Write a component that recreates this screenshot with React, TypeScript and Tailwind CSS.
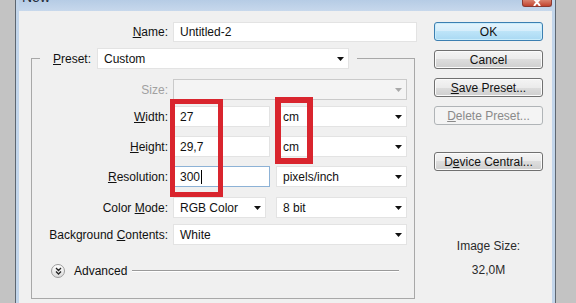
import type { ReactNode } from "react";

function Arrow({ muted }: { muted?: boolean }) {
  return (
    <svg width="7" height="4" viewBox="0 0 7 4" className="shrink-0">
      <path d="M0 0h7L3.5 4z" fill={muted ? "#a9a9a9" : "#111"} />
    </svg>
  );
}

function Select({ value, className, muted }: { value?: string; className: string; muted?: boolean }) {
  return (
    <div
      className={`flex h-[21px] items-center justify-between border pl-[6px] pr-[4px] ${
        muted ? "border-[#cacaca] bg-[#f4f4f4]" : "border-[#e3e3e3] bg-white"
      } ${className}`}
    >
      <span>{value}</span>
      <Arrow muted={muted} />
    </div>
  );
}

function Input({ value, focused }: { value: string; focused?: boolean }) {
  return (
    <div
      className={`flex h-[21px] w-[97px] items-center border bg-white pl-[6px] ${
        focused ? "border-[#8db2d6]" : "border-[#e3e3e3]"
      }`}
    >
      <span>{value}</span>
      {focused && <span className="ml-px h-[14px] w-px bg-black" />}
    </div>
  );
}

function Row({ label, muted, children, className }: { label: ReactNode; muted?: boolean; children: ReactNode; className: string }) {
  return (
    <div className={`flex h-[21px] items-center ${className}`}>
      <div className={`w-[136px] text-right ${muted ? "text-[#a0a0a0]" : ""}`}>{label}</div>
      <div className="ml-[5px] flex items-center">{children}</div>
    </div>
  );
}

function Button({ children, kind, className }: { children: ReactNode; kind?: "default" | "disabled"; className: string }) {
  const look =
    kind === "default"
      ? "border-[#3c7fb1] bg-[linear-gradient(#e5f4fc,#d4edfb_50%,#bde4f8_50%,#a9d9f3)] shadow-[inset_0_0_0_1px_#c9ecfb]"
      : kind === "disabled"
      ? "border-[#b0b4b7] bg-[#f4f4f4] text-[#8a8a8a]"
      : "border-[#707070] bg-[linear-gradient(#f4f4f4,#ebebeb_50%,#dddddd_50%,#cfcfcf)] shadow-[inset_0_0_0_1px_#fbfbfb]";
  return (
    <div className={`flex h-[19px] w-[109px] items-center justify-center rounded-[3px] border ${look} ${className}`}>
      {children}
    </div>
  );
}

export default function App() {
  return (
    <div className="relative flex h-[303px] w-[576px] overflow-hidden bg-[#c3c3c3] pl-[15px] pr-[20px] font-['Liberation_Sans',Arial,sans-serif] text-[12px] leading-[14px] text-[#111]">
      <div className="flex flex-1 flex-col border-x border-[#5d6670] bg-[#c2d5ea] px-[3px]">
        {/* title bar, mostly cut off at the top of the shot */}
        <div className="flex h-[11px] items-start justify-between overflow-hidden bg-[linear-gradient(#b6cce5,#c7d8ec)]">
          <span className="ml-[3px] -mt-[10px] text-[14px] leading-[14px] text-[#1e2a38]">New</span>
          <div className="mr-0 flex h-[7px] w-[30px] items-start justify-center overflow-hidden rounded-b-[3px] border border-t-0 border-[#8a3a32] bg-[linear-gradient(#d9826f,#c2442f)]">
            <svg width="10" height="6" viewBox="0 0 10 6">
              <path d="M0 -3L5 2L10 -3M2 6L5 2L8 6" stroke="#fff" strokeWidth="2" fill="none" />
            </svg>
          </div>
        </div>

        <div className="flex flex-1 bg-[#f0f0f0]">
          {/* left side */}
          <div className="flex w-[398px] flex-col">
            <div className="mt-[11px] flex h-[20px] items-center">
              <div className="w-[149px] text-right">
                <span className="underline">N</span>ame:
              </div>
              <div className="ml-[5px] flex h-[20px] w-[244px] items-center border border-[#e3e3e3] bg-white pl-[6px]">
                Untitled-2
              </div>
            </div>

            <fieldset className="ml-[12px] mt-[6px] w-[384px] border border-[#a8a8a8] pb-[20px]">
              <legend className="ml-[8px] pl-[13px] pr-[8px]">
                <div className="flex items-center">
                  <div className="w-[44px]">
                    <span className="underline">P</span>reset:
                  </div>
                  <Select value="Custom" className="h-[20px] w-[252px]" />
                </div>
              </legend>

              <Row label="Size:" muted className="mt-[10px]">
                <Select muted className="w-[234px]" />
              </Row>
              <Row
                label={
                  <>
                    <span className="underline">W</span>idth:
                  </>
                }
                className="mt-[6px]"
              >
                <Input value="27" />
                <Select value="cm" className="ml-[6px] w-[131px]" />
              </Row>
              <Row
                label={
                  <>
                    <span className="underline">H</span>eight:
                  </>
                }
                className="mt-[9px]"
              >
                <Input value="29,7" />
                <Select value="cm" className="ml-[6px] w-[131px]" />
              </Row>
              <Row
                label={
                  <>
                    <span className="underline">R</span>esolution:
                  </>
                }
                className="mt-[9px]"
              >
                <Input value="300" focused />
                <Select value="pixels/inch" className="ml-[6px] w-[131px]" />
              </Row>
              <Row
                label={
                  <>
                    Color <span className="underline">M</span>ode:
                  </>
                }
                className="mt-[10px]"
              >
                <Select value="RGB Color" className="w-[93px]" />
                <Select value="8 bit" className="ml-[10px] w-[131px]" />
              </Row>
              <Row
                label={
                  <>
                    Background <span className="underline">C</span>ontents:
                  </>
                }
                className="mt-[6px]"
              >
                <Select value="White" className="w-[234px]" />
              </Row>

              <div className="ml-[19px] mr-[15px] mt-[19px] flex h-[14px] items-center">
                <div className="flex h-[14px] w-[14px] items-center justify-center rounded-full border border-[#9c9c9c] bg-[linear-gradient(#ffffff,#dcdcdc)]">
                  <svg width="7" height="8" viewBox="0 0 7 8">
                    <path d="M1 1l2.5 2.5L6 1M1 4.5L3.5 7 6 4.5" stroke="#222" strokeWidth="1.3" fill="none" />
                  </svg>
                </div>
                <span className="ml-[9px]">Advanced</span>
                <div className="ml-[5px] h-[2px] flex-1 border-t border-b border-t-[#9a9a9a] border-b-white" />
              </div>
            </fieldset>
          </div>

          {/* right side */}
          <div className="ml-[17px] flex w-[109px] flex-col">
            <Button kind="default" className="mt-[11px]">
              OK
            </Button>
            <Button className="mt-[9px]">Cancel</Button>
            <Button className="mt-[9px]">
              <span>
                <span className="underline">S</span>ave Preset...
              </span>
            </Button>
            <Button kind="disabled" className="mt-[9px]">
              <span>
                <span className="underline">D</span>elete Preset...
              </span>
            </Button>
            <Button className="mt-[27px]">
              <span>
                D<span className="underline">e</span>vice Central...
              </span>
            </Button>
            <div className="mt-[68px] text-center text-[#2a2a2a]">Image Size:</div>
            <div className="mt-[10px] text-center text-[#2a2a2a]">32,0M</div>
          </div>
        </div>
      </div>

      {/* red annotation boxes drawn over the dialog */}
      <div className="absolute left-[170px] top-[99px] h-[98px] w-[53px] border-[5px] border-[#d9252e]" />
      <div className="absolute left-[275px] top-[97px] h-[67px] w-[38px] border-[6px] border-[#d9252e]" />
    </div>
  );
}
